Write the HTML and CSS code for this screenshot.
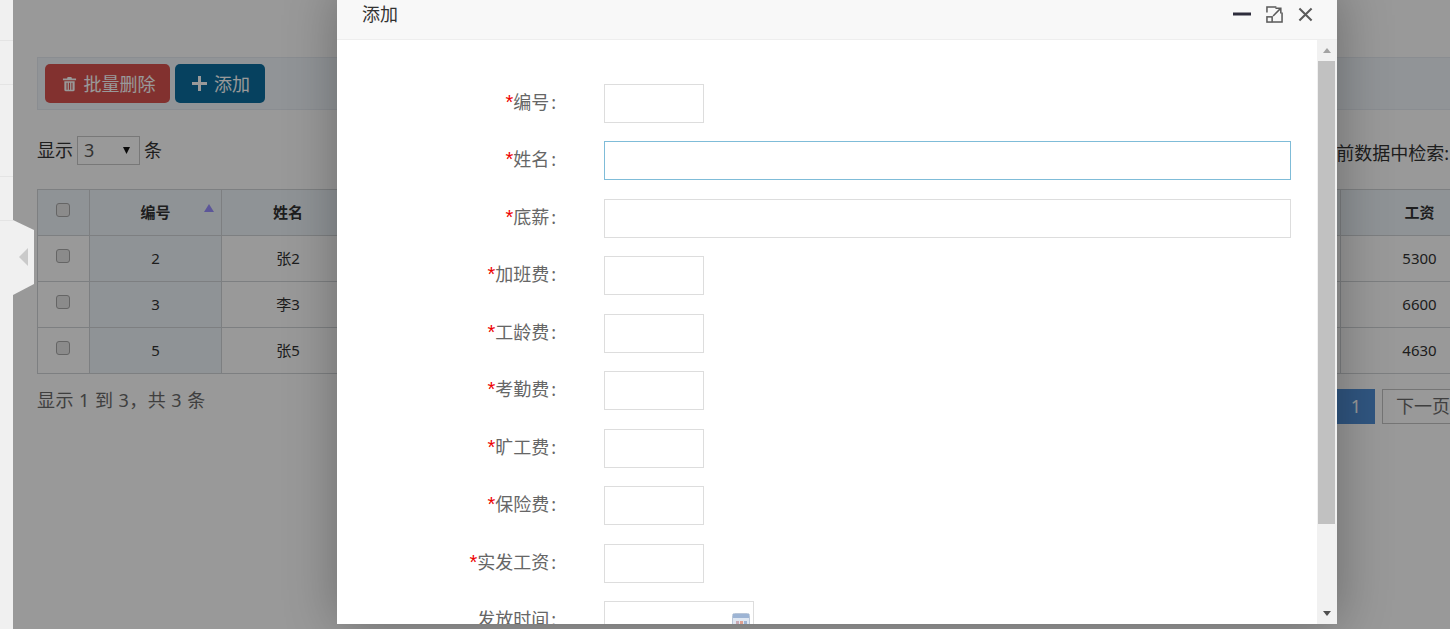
FILE: index.html
```html
<!DOCTYPE html>
<html lang="zh-CN">
<head>
<meta charset="utf-8">
<title>工资管理</title>
<link rel="stylesheet" href="styles.css">
</head>
<body>
<div class="page">
  <aside class="sidebar">
    <div class="side-row h40"></div>
    <div class="side-row h43"></div>
    <div class="side-row h91"></div>
    <div class="side-row h43"></div>
    <div class="collapse">
      <svg width="21" height="75" viewBox="0 0 21 75"><polygon class="tab-shape" points="0,0 21,10 21,64 0,75"/><polygon class="tab-arrow" points="6,37 15,28 15,46"/></svg>
    </div>
  </aside>
  <main class="content">
    <div class="toolbar">
      <button class="btn btn-danger">
        <svg class="ico" width="15" height="16" viewBox="0 0 16 16"><path d="M6 .5h4l.6 1.600H15v1.800H1V2.100h4.400zM2.500 5h11v9a1.800 1.800 0 0 1-1.800 1.800H4.300A1.800 1.800 0 0 1 2.500 14zm2.300 1.600v7.400H6V6.600zm2.600 0v7.400h1.200V6.600zm2.600 0v7.400h1.200V6.600z" fill-rule="evenodd"/></svg>
        <span class="btn-text">批量删除</span>
      </button>
      <button class="btn btn-primary">
        <svg class="ico" width="15" height="15" viewBox="0 0 15 15"><path d="M6 0h3v6h6v3H9v6H6V9H0V6h6z"/></svg>
        <span class="btn-text">添加</span>
      </button>
    </div>
    <div class="length-row">
      <div class="length">显示
        <span class="select">3<svg width="7" height="7" viewBox="0 0 7 7"><polygon points="0,0 7,0 3.500,7"/></svg></span>
        条</div>
      <div class="search">在当前数据中检索:</div>
    </div>
    <table class="grid">
      <colgroup>
        <col class="c-check"><col class="c-id"><col class="c-name">
        <col class="c-mid"><col class="c-mid"><col class="c-mid"><col class="c-mid"><col class="c-mid"><col class="c-mid">
        <col class="c-last">
      </colgroup>
      <thead>
        <tr>
          <th><input type="checkbox" class="check"></th>
          <th class="sorted">编号<svg class="sort" width="10" height="8" viewBox="0 0 10 8"><polygon points="5,0 10,8 0,8"/></svg></th>
          <th>姓名</th><th>底薪</th><th>加班费</th><th>工龄费</th><th>考勤费</th><th>旷工费</th><th>保险费</th><th>工资</th>
        </tr>
      </thead>
      <tbody>
        <tr><td><input type="checkbox" class="check"></td><td class="sorted">2</td><td>张2</td><td></td><td></td><td></td><td></td><td></td><td></td><td>5300</td></tr>
        <tr><td><input type="checkbox" class="check"></td><td class="sorted">3</td><td>李3</td><td></td><td></td><td></td><td></td><td></td><td></td><td>6600</td></tr>
        <tr><td><input type="checkbox" class="check"></td><td class="sorted">5</td><td>张5</td><td></td><td></td><td></td><td></td><td></td><td></td><td>4630</td></tr>
      </tbody>
    </table>
    <div class="foot-row">
      <div class="info">显示 1 到 3，共 3 条</div>
      <div class="pager"><span class="pg pg-active">1</span><span class="pg pg-next">下一页</span></div>
    </div>
  </main>
  <div class="overlay"></div>
  <section class="layer">
    <header class="layer-head">
      <span class="layer-title">添加</span>
      <div class="layer-tools">
        <svg width="18" height="18" viewBox="0 0 18 18"><rect class="solid" x="0" y="7.500" width="18" height="3"/></svg>
        <svg width="17" height="17" viewBox="0 0 18 18"><path class="line" d="M1 7V1h10M17 7v10H7"/><rect class="line" x="1" y="11.500" width="5.500" height="5.500"/><path class="line" d="M7.500 10.500 15.500 2.500M10 2.300h5.700V8"/></svg>
        <svg width="15" height="15" viewBox="0 0 16 16"><path class="line thick" d="M1.500 1.500l13 13M14.500 1.500l-13 13"/></svg>
      </div>
    </header>
    <div class="layer-body">
      <form class="form">
        <div class="row"><label class="lbl"><span class="req">*</span>编号<span class="colon">:</span></label><input class="inp short"></div>
        <div class="row"><label class="lbl"><span class="req">*</span>姓名<span class="colon">:</span></label><input class="inp wide focus"></div>
        <div class="row"><label class="lbl"><span class="req">*</span>底薪<span class="colon">:</span></label><input class="inp wide"></div>
        <div class="row"><label class="lbl"><span class="req">*</span>加班费<span class="colon">:</span></label><input class="inp short"></div>
        <div class="row"><label class="lbl"><span class="req">*</span>工龄费<span class="colon">:</span></label><input class="inp short"></div>
        <div class="row"><label class="lbl"><span class="req">*</span>考勤费<span class="colon">:</span></label><input class="inp short"></div>
        <div class="row"><label class="lbl"><span class="req">*</span>旷工费<span class="colon">:</span></label><input class="inp short"></div>
        <div class="row"><label class="lbl"><span class="req">*</span>保险费<span class="colon">:</span></label><input class="inp short"></div>
        <div class="row"><label class="lbl"><span class="req">*</span>实发工资<span class="colon">:</span></label><input class="inp short"></div>
        <div class="row"><label class="lbl">发放时间<span class="colon">:</span></label>
          <div class="inp date">
            <svg class="cal" width="18" height="18" viewBox="0 0 18 18"><rect x=".5" y=".5" width="17" height="17" rx="2" fill="#dfe7f2" stroke="#b9c6d8"/><rect x="1" y="1" width="16" height="4" fill="#9db4d4"/><rect x="4" y="8" width="3" height="3" fill="#c9a9b4"/><rect x="8" y="8" width="3" height="3" fill="#e0a090"/><rect x="12" y="8" width="3" height="3" fill="#9db4d4"/></svg>
          </div>
        </div>
      </form>
      <div class="scrollbar">
        <div class="sb-btn"><svg width="8" height="5" viewBox="0 0 8 5"><polygon class="arrow-up" points="4,0 8,5 0,5"/></svg></div>
        <div class="sb-track"><div class="sb-thumb"></div></div>
        <div class="sb-btn"><svg width="8" height="5" viewBox="0 0 8 5"><polygon class="arrow-down" points="0,0 8,0 4,5"/></svg></div>
      </div>
    </div>
  </section>
</div>
</body>
</html>
```

FILE: styles.css
```css
* { box-sizing: border-box; }
html, body { margin: 0; padding: 0; height: 100%; overflow: hidden; }
body { font-family: "Noto Sans", "Noto Sans CJK SC", sans-serif; color: #333; background: #fff; }

.page { position: relative; display: flex; width: 1450px; height: 629px; overflow: hidden; }

/* sidebar */
.sidebar { position: relative; z-index: 2; flex: 0 0 13px; background: #f0f0f0; }
.side-row { border-bottom: 1px solid #e4e4e4; }
.h40 { height: 41px; }
.h43 { height: 44px; }
.h91 { height: 92px; }
.collapse { position: absolute; left: 13px; top: 220px; width: 21px; height: 75px; }
.collapse svg { display: block; }
.tab-shape { fill: #f0f0f0; }
.tab-arrow { fill: #cacaca; }

/* content */
.content { flex: 0 0 1485px; padding: 57px 0 0 24px; background: #fff; }
.toolbar { display: flex; gap: 5px; width: 1461px; height: 53px; padding: 6px 7px; background: #f2f7fc; border: 1px solid #e6ecf2; }
.btn { display: flex; align-items: center; justify-content: center; gap: 7px; height: 39px; border: 0; border-radius: 5px; color: #fff; font: inherit; font-size: 18px; padding: 0 0 0 2px; }
.btn-text { padding-bottom: 2px; }
.btn-danger { width: 125px; background: #d9534f; }
.btn-primary { width: 90px; background: #0a6d9e; }
.ico { fill: #fff; }

.length-row { display: flex; justify-content: space-between; width: 1461px; margin-top: 25px; padding-right: 49px; font-size: 18px; line-height: 30px; height: 30px; color: #333; }
.length { display: flex; align-items: center; gap: 4px; }
.select { display: flex; align-items: center; justify-content: space-between; width: 63px; height: 29px; padding: 0 9px 0 6px; border: 1px solid #c8c8c8; color: #555; }
.select svg { fill: #111; }
.search { padding-top: 3px; }

.grid { width: 1461px; margin-top: 24px; border-collapse: collapse; table-layout: fixed; font-size: 15px; color: #333; }
.c-check { width: 52px; }
.c-id { width: 132px; }
.c-name { width: 133px; }
.c-mid { width: 164.34px; }
.c-last { width: 158px; }
.grid th, .grid td { height: 46px; padding: 0 0 2px; border: 1px solid #d0d4d8; text-align: center; vertical-align: middle; }
.grid th { position: relative; font-weight: 700; background: #eff6fb; }
.grid td.sorted { background: #eff6fb; }
.sort { position: absolute; right: 7px; top: 14px; fill: #9a90ff; }
.check { appearance: none; display: block; width: 14px; height: 14px; margin: -4px 0 0 18px; border: 1px solid #a8a8a8; border-radius: 3px; background: #e8e8e8; }

.foot-row { display: flex; justify-content: space-between; width: 1461px; margin-top: 15px; padding-right: 32px; font-size: 18px; color: #6a6a6a; }
.info { line-height: 22px; letter-spacing: .45px; }
.pager { display: flex; gap: 7px; }
.pg { display: block; height: 35px; padding: 0 14px; line-height: 33px; border: 1px solid #c4c4c4; background: #fff; }
.pg-next { padding: 0 15px 0 13px; }
.pg-active { width: 38px; padding: 0; text-align: center; color: #fff; background: #5090d8; border-color: #5090d8; }

/* overlay and dialog */
.overlay { position: absolute; inset: 0; z-index: 1; background: rgba(0, 0, 0, .4); }
.layer { position: absolute; z-index: 3; left: 337px; top: -11px; width: 1000px; height: 635px; display: flex; flex-direction: column; background: #fff; box-shadow: 1px 1px 50px rgba(0, 0, 0, .3); }
.layer-head { flex: 0 0 51px; display: flex; align-items: center; justify-content: space-between; padding: 0 24px 0 25px; background: #f8f8f8; border-bottom: 1px solid #eee; }
.layer-title { font-size: 18px; color: #333; padding-bottom: 2px; }
.layer-tools { display: flex; align-items: center; gap: 15px; }
.layer-tools svg { display: block; }
.solid { fill: #2e2d3c; }
.line { fill: none; stroke: #5a5a5a; stroke-width: 1.6; }
.thick { stroke-width: 2.2; }

.layer-body { flex: 1; display: flex; min-height: 0; }
.form { flex: 1; min-width: 0; overflow: hidden; padding-top: 43.9px; }
.row { display: flex; align-items: center; gap: 48px; height: 39px; margin-bottom: 18.5px; }
.lbl { flex: 0 0 219px; text-align: right; font-size: 18px; line-height: 26px; color: #666; margin-top: -2.8px; }
.req { font-family: "Liberation Sans", sans-serif; font-size: 20px; line-height: 0; color: #e00; }
.colon { margin-left: 2px; }
.inp { display: block; height: 39px; padding: 0; border: 1px solid #ddd; background: #fff; outline: none; }
.short { width: 100px; }
.wide { width: 687px; }
.focus { border-color: #7fbcd8; }
.date { position: relative; flex: 0 0 150px; }
.cal { position: absolute; right: 3px; top: 11px; }

.scrollbar { flex: 0 0 20px; display: flex; flex-direction: column; background: #f1f1f1; }
.sb-btn { flex: 0 0 21px; display: flex; align-items: center; justify-content: center; }
.sb-btn svg { display: block; }
.arrow-up { fill: #a3a3a3; }
.arrow-down { fill: #505050; }
.sb-track { flex: 1; padding: 0 2px 0 1px; }
.sb-thumb { height: 463px; background: #c1c1c1; }
```
